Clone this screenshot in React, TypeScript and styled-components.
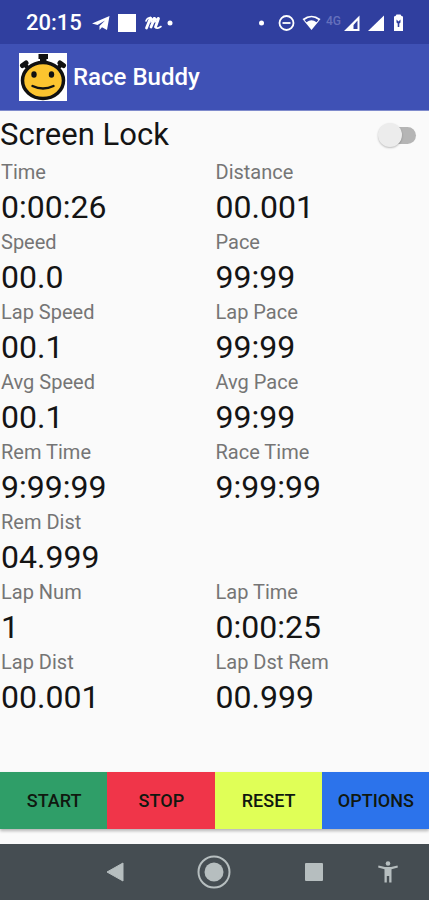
import React, { useState } from "react";
import styled, { createGlobalStyle } from "styled-components";

const GlobalStyle = createGlobalStyle`
  *, *::before, *::after { box-sizing: border-box; }
  body {
    margin: 0;
    background: #fafafa;
    font-family: Roboto, "Noto Sans", sans-serif;
    color: #141414;
  }
`;

const Screen = styled.div`
  display: flex;
  flex-direction: column;
  min-height: 100vh;
`;

const StatusBar = styled.div`
  display: flex;
  align-items: center;
  justify-content: space-between;
  height: 44px;
  padding: 2px 24px 0 26px;
  background: #303f9f;
  color: #fff;
`;

const StatusGroup = styled.div`
  display: flex;
  align-items: center;
  gap: 8px;
`;

const Clock = styled.span`
  font-size: 22px;
  font-weight: 500;
  line-height: 26px;
  margin-right: 2px;
`;

const Icon = styled.svg`
  display: block;
  flex: none;
`;

const AppBar = styled.header`
  display: flex;
  align-items: center;
  gap: 6px;
  height: 67px;
  padding: 0 19px;
  background: #3f51b5;
  border-bottom: 1px solid #7f8bcc;
`;

const Title = styled.h1`
  margin: 0;
  font-size: 24px;
  font-weight: 500;
  line-height: 32px;
  color: #fff;
`;

const Content = styled.main`
  flex: 1;
  display: flex;
  flex-direction: column;
`;

const LockRow = styled.label`
  display: flex;
  align-items: center;
  justify-content: space-between;
  height: 48px;
  padding-right: 13px;
  font-size: 31px;
  line-height: 40px;
`;

const Switch = styled.input`
  appearance: none;
  display: flex;
  align-items: center;
  width: 34px;
  height: 17px;
  margin: 0;
  background: #b5b5b5;
  border-radius: 9px;
  cursor: pointer;

  &::before {
    content: "";
    width: 24px;
    height: 24px;
    margin: 0 -4px;
    border-radius: 50%;
    background: #ececec;
    box-shadow: 0 1px 2px rgba(0, 0, 0, 0.25);
  }

  &:checked {
    justify-content: flex-end;
  }
  &:checked::before {
    background: #3f51b5;
  }
`;

const Metrics = styled.dl`
  display: grid;
  grid-template-columns: 1fr 1fr;
  margin: 0;
`;

const Metric = styled.div<{ $wide?: boolean }>`
  grid-column: ${(p) => (p.$wide ? "1 / -1" : "auto")};
  padding-left: 1px;
`;

const MetricLabel = styled.dt`
  font-size: 20px;
  line-height: 26px;
  color: #757575;
`;

const MetricValue = styled.dd`
  margin: 0;
  font-size: 32px;
  line-height: 44px;
`;

const Actions = styled.div`
  display: grid;
  grid-template-columns: repeat(4, 1fr);
  margin: auto 0 15px;
  box-shadow: 0 2px 3px rgba(0, 0, 0, 0.28);
`;

const ActionButton = styled.button<{ $color: string }>`
  height: 57px;
  padding: 0 0 0 1px;
  border: 0;
  background: ${(p) => p.$color};
  color: #10180f;
  font-family: inherit;
  font-size: 18px;
  font-weight: 500;
  cursor: pointer;
`;

const NavBar = styled.nav`
  display: grid;
  grid-template-columns: 1fr 1fr 1fr 48px;
  align-items: center;
  height: 56px;
  padding: 0 17px 0 65px;
  background: #454d52;
`;

const NavButton = styled.button`
  display: flex;
  justify-content: center;
  align-items: center;
  height: 56px;
  padding: 0;
  border: 0;
  background: none;
  color: #b6bebf;
  cursor: pointer;
`;

const metrics = [
  { label: "Time", value: "0:00:26" },
  { label: "Distance", value: "00.001" },
  { label: "Speed", value: "00.0" },
  { label: "Pace", value: "99:99" },
  { label: "Lap Speed", value: "00.1" },
  { label: "Lap Pace", value: "99:99" },
  { label: "Avg Speed", value: "00.1" },
  { label: "Avg Pace", value: "99:99" },
  { label: "Rem Time", value: "9:99:99" },
  { label: "Race Time", value: "9:99:99" },
  { label: "Rem Dist", value: "04.999", wide: true },
  { label: "Lap Num", value: "1" },
  { label: "Lap Time", value: "0:00:25" },
  { label: "Lap Dist", value: "00.001" },
  { label: "Lap Dst Rem", value: "00.999" },
];

const actions = [
  { label: "START", color: "#2f9e68" },
  { label: "STOP", color: "#f03549" },
  { label: "RESET", color: "#e0ff57" },
  { label: "OPTIONS", color: "#2c73eb" },
];

function AppLogo() {
  return (
    <Icon width="48" height="48" viewBox="0 0 48 48" aria-hidden="true">
      <rect width="48" height="48" fill="#fff" />
      <path d="M19.500 1h9.500v5h-1.500v5h-6.500V6h-1.500z" fill="#111" />
      <path d="M5 11l6 6M43 11l-6 6" stroke="#111" strokeWidth="4" />
      <path d="M3.500 12.500l3.500-2.500M44.500 12.500l-3.500-2.500" stroke="#111" strokeWidth="5" strokeLinecap="round" />
      <ellipse cx="24" cy="27.500" rx="20.500" ry="18" fill="#fcc42f" stroke="#111" strokeWidth="3.500" />
      <ellipse cx="15" cy="21.500" rx="2.700" ry="3.300" fill="#111" />
      <ellipse cx="32.500" cy="21.500" rx="2.700" ry="3.300" fill="#111" />
      <path d="M13.500 33q10.500 5 21 0" fill="none" stroke="#111" strokeWidth="2.400" strokeLinecap="round" />
    </Icon>
  );
}

export default function App() {
  const [locked, setLocked] = useState(false);

  return (
    <>
      <GlobalStyle />
      <Screen>
        <StatusBar>
          <StatusGroup>
            <Clock>20:15</Clock>
            <Icon width="18" height="16" viewBox="0 0 18 16" fill="#fff">
              <path d="M0 8.500L17.500 1L15 15L10 12.200L7.500 15V11L13 5.500L5.500 10z" />
            </Icon>
            <Icon width="18" height="18" viewBox="0 0 18 18">
              <rect width="18" height="18" fill="#fff" />
            </Icon>
            <Icon width="30" height="16" viewBox="0 0 30 16" fill="none" stroke="#fff" strokeLinecap="round" strokeLinejoin="round">
              <path d="M2.500 13L6.500 3M7 12L10.500 3.500M11.500 12L14.500 3.500" strokeWidth="2.800" />
              <path d="M2 6Q3 2.500 6.500 2.800Q8.500 3.500 7 7Q9 2.800 10.500 2.800Q12 3.500 11 7Q13 2.800 14.500 3M11.500 12Q13 14.500 17 11.500" strokeWidth="1.600" />
              <circle cx="26" cy="8" r="2.500" fill="#fff" stroke="none" />
            </Icon>
          </StatusGroup>
          <Icon width="146" height="18" viewBox="0 0 146 18" fill="#fff">
            <circle cx="2.500" cy="9" r="2.500" />
            <circle cx="27.500" cy="9" r="7" fill="none" stroke="#fff" strokeWidth="1.800" />
            <path d="M23.500 8.100h8v1.800h-8z" />
            <path d="M43.500 5Q52.500-1.500 61.500 5L52.500 16z" />
            <path d="M45.500 6Q52.500 0.500 59.500 6L57.500 8.200Q52.500 4.500 47.500 8.200z" fill="#303f9f" />
            <text x="67" y="10.500" fontSize="12" fontWeight="500" fill="#6570bc">4G</text>
            <path d="M85 17L100.500 1.500V17zM98.500 6.500L94.500 11V15H98.500z" fillRule="evenodd" />
            <path d="M109 17L125 1.500V17z" />
            <path d="M135 3Q135 2 136.500 2L137.500 0.500h4L142.500 2Q144 2 144 3V17h-9z" />
            <path d="M137.500 5.500l2 2 2-2v3l-1.200 1v3.500h-1.600V9.500l-1.200-1z" fill="#303f9f" />
          </Icon>
        </StatusBar>
        <AppBar>
          <AppLogo />
          <Title>Race Buddy</Title>
        </AppBar>
        <Content>
          <LockRow>
            Screen Lock
            <Switch
              type="checkbox"
              role="switch"
              checked={locked}
              onChange={(e) => setLocked(e.target.checked)}
            />
          </LockRow>
          <Metrics>
            {metrics.map((m) => (
              <Metric key={m.label} $wide={m.wide}>
                <MetricLabel>{m.label}</MetricLabel>
                <MetricValue>{m.value}</MetricValue>
              </Metric>
            ))}
          </Metrics>
          <Actions>
            {actions.map((a) => (
              <ActionButton key={a.label} type="button" $color={a.color}>
                {a.label}
              </ActionButton>
            ))}
          </Actions>
        </Content>
        <NavBar>
          <NavButton type="button" aria-label="Back">
            <Icon width="18" height="20" viewBox="0 0 18 20">
              <path d="M17 1v18L1 10z" fill="currentColor" stroke="currentColor" strokeLinejoin="round" />
            </Icon>
          </NavButton>
          <NavButton type="button" aria-label="Home">
            <Icon width="34" height="34" viewBox="0 0 34 34">
              <circle cx="17" cy="17" r="15.500" fill="none" stroke="currentColor" strokeWidth="2" />
              <circle cx="17" cy="17" r="9.500" fill="currentColor" />
            </Icon>
          </NavButton>
          <NavButton type="button" aria-label="Recent apps">
            <Icon width="18" height="18" viewBox="0 0 18 18">
              <rect width="18" height="18" rx="1" fill="currentColor" />
            </Icon>
          </NavButton>
          <NavButton type="button" aria-label="Accessibility">
            <Icon width="20" height="22" viewBox="0 0 20 22" fill="currentColor">
              <circle cx="10" cy="2.500" r="2.300" />
              <path d="M0.500 4.500L7 6h6l6.500-1.500 0.400 2L13.500 8.200V21.500h-2.300V15H8.800v6.500H6.500V8.200L0.100 6.500z" />
            </Icon>
          </NavButton>
        </NavBar>
      </Screen>
    </>
  );
}
